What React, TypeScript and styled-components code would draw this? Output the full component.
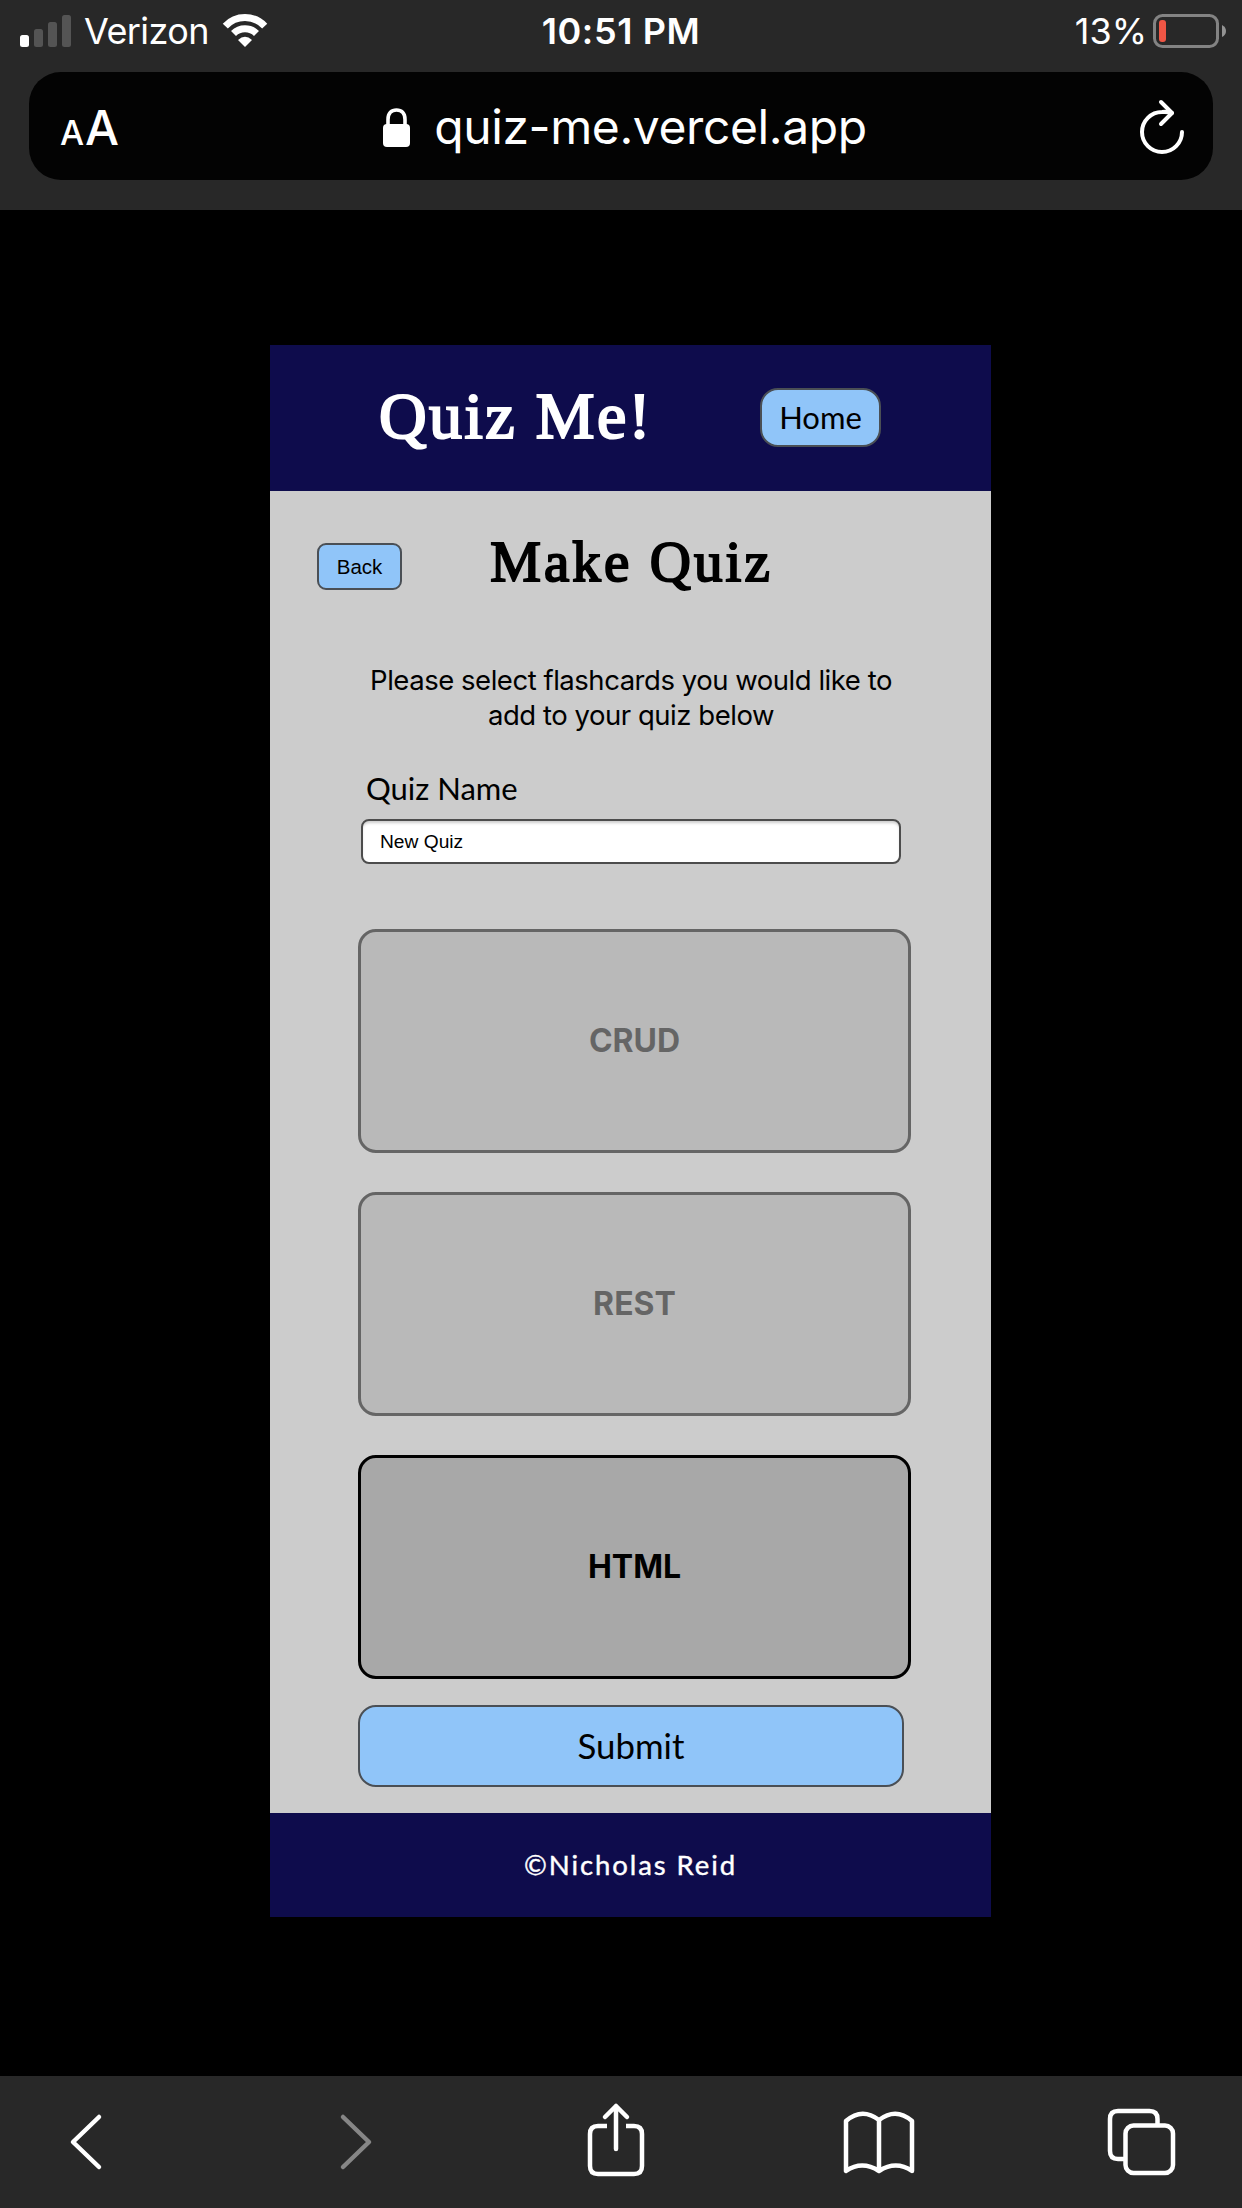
import React from "react";
import styled, { createGlobalStyle } from "styled-components";

const GlobalStyle = createGlobalStyle`
  * { box-sizing: border-box; }
  body { margin: 0; background: #000; }
  button, input { font: inherit; color: inherit; margin: 0; }
  svg { display: block; flex: none; }
`;

const system = `Inter, "Noto Sans", sans-serif`;
const lato = `Lato, "Open Sans", sans-serif`;
const arial = `"Liberation Sans", Arial, sans-serif`;
const serif = `"Liberation Serif", "Times New Roman", serif`;

const Screen = styled.div`
  width: 1242px;
  height: 2208px;
  display: flex;
  flex-direction: column;
  background: #000;
  overflow: hidden;
`;

const TopChrome = styled.header`
  flex: none;
  height: 210px;
  background: #282828;
  color: #fff;
  font-family: ${system};
`;

const StatusBar = styled.div`
  height: 72px;
  padding: 0 15px 10px 20px;
  display: grid;
  grid-template-columns: 1fr auto 1fr;
  align-items: center;
`;

const StatusGroup = styled.div<{ $end?: boolean }>`
  display: flex;
  align-items: center;
  justify-content: ${(p) => (p.$end ? "flex-end" : "flex-start")};
`;

const StatusText = styled.span<{ $weight?: number; $spacing?: number }>`
  font-size: 36px;
  line-height: 62px;
  font-weight: ${(p) => p.$weight ?? 400};
  letter-spacing: ${(p) => p.$spacing ?? 0}px;
  white-space: nowrap;
`;

const Clock = styled(StatusText)`
  margin-right: 5px;
`;

const Carrier = styled(StatusText)`
  width: 138px;
  margin-left: 12px;
`;

const Percent = styled(StatusText)`
  margin-right: 6px;
`;

const AddressBar = styled.div`
  height: 108px;
  margin: 0 29px;
  padding: 0 28px 4px 31px;
  border-radius: 32px;
  background: #030303;
  display: grid;
  grid-template-columns: 58px 1fr 46px;
  align-items: center;
`;

const Address = styled.div`
  display: flex;
  align-items: center;
  justify-content: center;
  gap: 23px;
  padding: 0 7px 2px 0;
  font-size: 48px;
  line-height: 100px;
  white-space: nowrap;
`;

const Url = styled.span`
  padding-bottom: 2px;
  letter-spacing: -0.4px;
`;

const TextSize = styled.div`
  display: flex;
  align-items: baseline;
  gap: 1px;
  padding-top: 4px;
  line-height: 104px;
`;

const Letter = styled.span<{ $size: number }>`
  font-size: ${(p) => p.$size}px;
  font-weight: 500;
`;

const Page = styled.main`
  flex: 1;
  padding: 135px 0 0 270px;
`;

const Panel = styled.section`
  width: 721px;
  background: #ccc;
  color: #000;
`;

const AppHeader = styled.div`
  height: 146px;
  padding: 0 110px 0 109px;
  display: flex;
  align-items: center;
  justify-content: space-between;
  background: #0e0c4c;
`;

const Brand = styled.h1`
  margin: 0;
  padding-bottom: 4px;
  color: #fff;
  letter-spacing: 2.4px;
  -webkit-text-stroke: 2.2px #fff;
  font: 400 66px/142px ${serif};
`;

const BlueButton = styled.button`
  padding: 0;
  border: 2px solid #4a4f55;
  background: #90c5f9;
  color: #000;
  text-align: center;
`;

const HomeButton = styled(BlueButton)`
  width: 121px;
  height: 59px;
  margin-bottom: 2px;
  border-radius: 18px;
  font: 400 31px/55px ${lato};
`;

const TitleRow = styled.div`
  height: 146px;
  padding: 0 47px;
  display: grid;
  grid-template-columns: 85px 1fr 85px;
  align-items: center;
`;

const BackButton = styled(BlueButton)`
  height: 47px;
  margin-top: 4px;
  border-radius: 9px;
  font: 400 20.5px/43px ${arial};
`;

const Title = styled.h2`
  margin: 0;
  padding: 0 0 4px 2px;
  text-align: center;
  letter-spacing: 3.1px;
  -webkit-text-stroke: 2px #000;
  font: 400 57px/142px ${serif};
`;

const Form = styled.form`
  padding: 26px 87px 26px 88px;
`;

const Hint = styled.p`
  margin: 0;
  text-align: center;
  white-space: nowrap;
  letter-spacing: -0.47px;
  font: 400 27.5px/35px ${system};
`;

const Label = styled.label`
  display: block;
  margin: 27px 0 0 8px;
  font: 400 31px/56px ${lato};
`;

const NameInput = styled.input`
  display: block;
  width: 540px;
  height: 45px;
  margin: 3px 0 0 3px;
  padding: 0 17px;
  border: 2px solid #4c4c4c;
  border-radius: 8px;
  background: #fff;
  box-shadow: inset 0 3px 3px -1px #ccc;
  font: 400 19.2px/41px ${arial};
  outline: none;
`;

const Cards = styled.div`
  width: 553px;
  margin-top: 65px;
  display: grid;
  gap: 39px;
`;

const Card = styled.button<{ $selected: boolean }>`
  height: 224px;
  padding: 0;
  border: 3px solid #000;
  border-radius: 18px;
  background: #a8a8a8;
  opacity: ${(p) => (p.$selected ? 1 : 0.5)};
  text-align: center;
  color: #000;
  font: 700 32px/36px ${system};
`;

const Submit = styled(BlueButton)`
  display: block;
  width: 546px;
  height: 82px;
  margin-top: 26px;
  border-radius: 18px;
  font: 400 34.8px/78px ${lato};
`;

const AppFooter = styled.footer`
  height: 104px;
  background: #0e0c4c;
  color: #fff;
  text-align: center;
  letter-spacing: 1.9px;
  -webkit-text-stroke: 0.4px #fff;
  font: 400 27.5px/104px ${lato};
`;

const Toolbar = styled.nav`
  flex: none;
  height: 132px;
  background: #282828;
  display: flex;
  align-items: flex-start;
  padding: 24px 0 0 63px;
`;

const Tool = styled.div<{ $gap?: number; $dim?: boolean }>`
  width: 80px;
  height: 84px;
  margin-left: ${(p) => p.$gap ?? 0}px;
  color: ${(p) => (p.$dim ? "#868686" : "#fff")};
`;

const ToolIcon = ({ children }: { children: React.ReactNode }) => (
  <svg width="80" height="84" viewBox="0 0 80 84" fill="none" stroke="currentColor" strokeWidth="4.5" strokeLinecap="round" strokeLinejoin="round">
    {children}
  </svg>
);

const Signal = () => (
  <svg width="52" height="34" viewBox="0 0 52 34">
    <rect x="0" y="21" width="9" height="12" rx="2.5" fill="#fff" />
    <rect x="14" y="15" width="9" height="18" rx="2.5" fill="#545454" />
    <rect x="28" y="8" width="9" height="25" rx="2.5" fill="#545454" />
    <rect x="42" y="1" width="9" height="32" rx="2.5" fill="#545454" />
  </svg>
);

const Wifi = () => (
  <svg width="46" height="34" viewBox="0 0 46 34" fill="none" stroke="#fff">
    <path d="M3.3 12.1A27 27 0 0 1 42.7 12.1" strokeWidth="7" />
    <path d="M11.5 19.5A16.2 16.2 0 0 1 34.5 19.5" strokeWidth="7" />
    <path d="M23 33L16 26Q23 19.5 30 26Z" fill="#fff" stroke="none" />
  </svg>
);

const Battery = () => (
  <svg width="74" height="34" viewBox="0 0 74 34">
    <rect x="1.5" y="1.5" width="63" height="31" rx="8" fill="none" stroke="#838383" strokeWidth="3" />
    <rect x="6" y="6" width="7" height="22" rx="3" fill="#ef5645" />
    <path d="M69 11Q73 13 73 17T69 23Z" fill="#939393" />
  </svg>
);

const Lock = () => (
  <svg width="28" height="40" viewBox="0 0 28 40">
    <path d="M5 18V11.5C5 5 8.5 2 13.5 2S22 5 22 11.5V18" fill="none" stroke="#fff" strokeWidth="3.6" />
    <rect x="0" y="16" width="27" height="23" rx="4" fill="#fff" />
  </svg>
);

const Reload = () => (
  <svg width="46" height="60" viewBox="0 0 46 60" fill="none" stroke="#fff" strokeWidth="4" strokeLinecap="round" strokeLinejoin="round">
    <path d="M43 33A20 20 0 1 1 23 13Q28 12.5 33 14" />
    <path d="M22 3L33 14L22 25" />
  </svg>
);

const decks = [
  { name: "CRUD", selected: false },
  { name: "REST", selected: false },
  { name: "HTML", selected: true },
];

export default function App() {
  return (
    <Screen>
      <GlobalStyle />
      <TopChrome>
        <StatusBar>
          <StatusGroup>
            <Signal />
            <Carrier $spacing={-0.6}>Verizon</Carrier>
            <Wifi />
          </StatusGroup>
          <Clock $weight={600} $spacing={0.6}>10:51 PM</Clock>
          <StatusGroup $end>
            <Percent>13%</Percent>
            <Battery />
          </StatusGroup>
        </StatusBar>
        <AddressBar>
          <TextSize>
            <Letter $size={34}>A</Letter>
            <Letter $size={48}>A</Letter>
          </TextSize>
          <Address>
            <Lock />
            <Url>quiz-me.vercel.app</Url>
          </Address>
          <Reload />
        </AddressBar>
      </TopChrome>

      <Page>
        <Panel>
          <AppHeader>
            <Brand>Quiz Me!</Brand>
            <HomeButton>Home</HomeButton>
          </AppHeader>
          <TitleRow>
            <BackButton>Back</BackButton>
            <Title>Make Quiz</Title>
          </TitleRow>
          <Form onSubmit={(e) => e.preventDefault()}>
            <Hint>
              Please select flashcards you would like to
              <br />
              add to your quiz below
            </Hint>
            <Label htmlFor="quiz-name">Quiz Name</Label>
            <NameInput id="quiz-name" defaultValue="New Quiz" />
            <Cards>
              {decks.map((deck) => (
                <Card key={deck.name} type="button" $selected={deck.selected}>
                  {deck.name}
                </Card>
              ))}
            </Cards>
            <Submit type="submit">Submit</Submit>
          </Form>
          <AppFooter>©Nicholas Reid</AppFooter>
        </Panel>
      </Page>

      <Toolbar>
        <Tool>
          <ToolIcon><path d="M36 17L10 42L36 67" /></ToolIcon>
        </Tool>
        <Tool $gap={188} $dim>
          <ToolIcon><path d="M12 17L38 42L12 67" /></ToolIcon>
        </Tool>
        <Tool $gap={168}>
          <ToolIcon>
            <path d="M28 26H19Q11 26 11 34V66Q11 74 19 74H55Q63 74 63 66V34Q63 26 55 26H47" strokeLinecap="butt" />
            <path d="M37 49V6M26 17L37 6L48 17" />
          </ToolIcon>
        </Tool>
        <Tool $gap={181}>
          <ToolIcon>
            <path d="M6 21Q22 7 39 20Q56 7 72 21V71Q56 60 39 71Q22 60 6 71ZM39 20V71" />
          </ToolIcon>
        </Tool>
        <Tool $gap={180}>
          <ToolIcon>
            <path d="M57.5 25V19Q57.5 11 49.5 11H18Q10 11 10 19V51Q10 59 18 59H26" strokeLinecap="butt" />
            <rect x="25.5" y="25.5" width="47.5" height="47.5" rx="8" />
          </ToolIcon>
        </Tool>
      </Toolbar>
    </Screen>
  );
}
